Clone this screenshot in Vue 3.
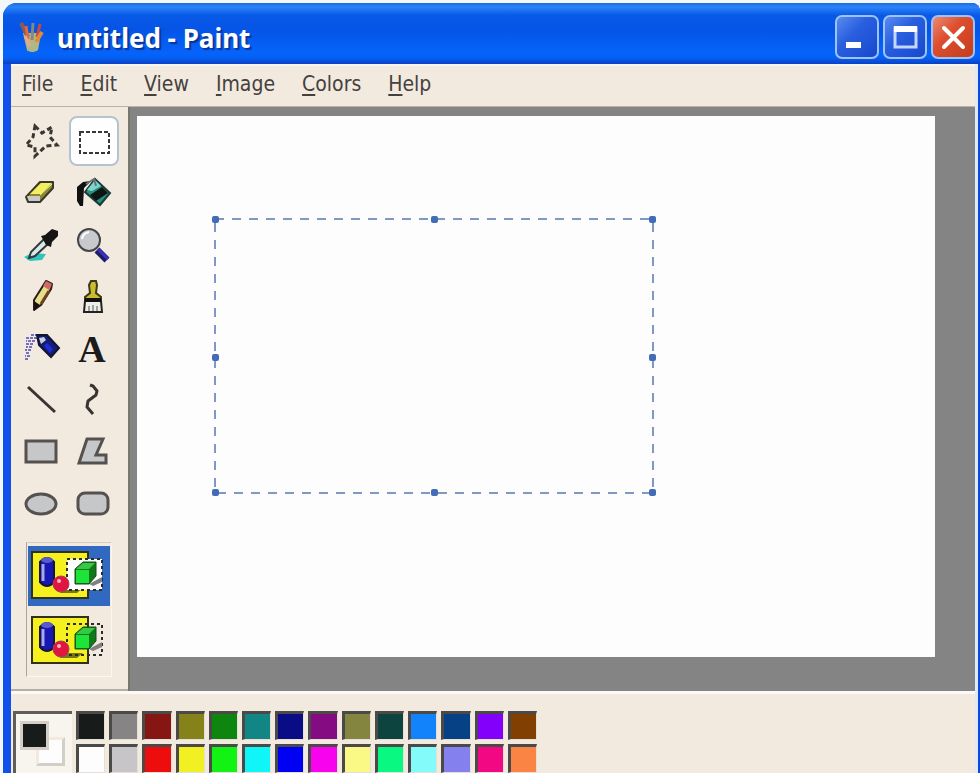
<template>
  <div class="desktop">
    <main class="window">
      <!-- Title bar -->
      <header class="title-bar">
        <svg class="app-icon" viewBox="0 0 26 34" aria-hidden="true">
          <path d="M4 13 L22 13 L19 30 Q13 34 8 30 Z" fill="#c5b56c" />
          <path d="M8 14 L10 31 M13 14 L13 32 M18 14 L16 31" stroke="#a9b98e" stroke-width="3" fill="none" />
          <path d="M2 3 L9 17" stroke="#8c5a55" stroke-width="4" fill="none" />
          <path d="M7 6 L9 19" stroke="#d96a45" stroke-width="3" fill="none" />
          <path d="M14 3 L13 20" stroke="#7d8b86" stroke-width="3" fill="none" />
          <path d="M21 4 L18 17" stroke="#c64a41" stroke-width="3" fill="none" />
          <path d="M23 12 L17 22" stroke="#df8b39" stroke-width="4" fill="none" />
          <path d="M6 16 L11 26" stroke="#e9a88c" stroke-width="3" fill="none" />
        </svg>
        <h1 class="title">untitled - Paint</h1>
        <div class="window-buttons">
          <button class="win-btn" type="button" aria-label="Minimize">
            <svg viewBox="0 0 40 40"><rect x="9" y="25" width="15" height="6" fill="#fff" /></svg>
          </button>
          <button class="win-btn" type="button" aria-label="Maximize">
            <svg viewBox="0 0 40 40">
              <rect x="10" y="11" width="21" height="19" fill="none" stroke="#c3d6fb" stroke-width="3" />
              <rect x="9" y="9" width="23" height="6" fill="#fff" />
            </svg>
          </button>
          <button class="win-btn close" type="button" aria-label="Close">
            <svg viewBox="0 0 40 40">
              <path d="M11 11 L30 30 M30 11 L11 30" stroke="#fff" stroke-width="4" stroke-linecap="round" />
            </svg>
          </button>
        </div>
      </header>

      <div class="client">
        <!-- Menu -->
        <nav class="menu-bar">
          <button v-for="item in menus" :key="item" class="menu-item" type="button">
            <u>{{ item[0] }}</u>{{ item.slice(1) }}
          </button>
        </nav>

        <div class="work-area">
          <!-- Tools -->
          <aside class="toolbox">
            <div class="tools">
              <button
                v-for="tool in tools"
                :key="tool.name"
                class="tool"
                :class="{ active: tool.name === activeTool }"
                type="button"
                :aria-label="tool.name"
                :aria-pressed="tool.name === activeTool"
                @click="activeTool = tool.name"
              >
                <span v-if="tool.letter" class="letter">{{ tool.letter }}</span>
                <svg v-else viewBox="0 0 40 40" v-html="tool.art"></svg>
              </button>
            </div>

            <div class="options">
              <button
                v-for="mode in modes"
                :key="mode"
                class="option"
                :class="{ active: mode === activeMode }"
                type="button"
                :aria-label="mode"
                :aria-pressed="mode === activeMode"
                @click="activeMode = mode"
              >
                <svg viewBox="0 0 76 50">
                  <rect x="1" y="1" width="56" height="46" fill="#f6f01f" stroke="#333018" stroke-width="2" />
                  <path d="M28 42 L46 42 L52 37 L38 37 Z" fill="#77741a" />
                  <path d="M9 11 Q16 3 23 11 L23 31 Q16 39 9 31 Z" fill="#1717b4" stroke="#15153f" stroke-width="2" />
                  <path d="M12 13 L12 30" stroke="#a7a7ec" stroke-width="3" />
                  <ellipse cx="16" cy="9" rx="6" ry="3" fill="#5a5acb" />
                  <rect
                    x="36" y="8" width="35" height="31"
                    :fill="mode === 'Opaque' ? '#fff' : 'none'"
                    stroke="#2b2b2b" stroke-width="2" stroke-dasharray="3 3"
                  />
                  <circle cx="30" cy="33" r="8" fill="#e01540" stroke="#a6415a" stroke-width="1" />
                  <circle cx="28" cy="30" r="2" fill="#ffb6c6" />
                  <path d="M58 33 L71 26 L71 31 L62 35 Z" fill="#808080" />
                  <path d="M44 18 L52 11 L65 11 L65 25 L58 33 L44 33 Z" fill="#11781b" stroke="#174d1a" stroke-width="1" />
                  <path d="M45 18 L52 12 L64 12 L58 18 Z" fill="#35c944" />
                  <rect x="45" y="19" width="13" height="13" fill="#1ee43a" />
                </svg>
              </button>
            </div>
          </aside>

          <!-- Canvas -->
          <section class="workspace">
            <div class="canvas">
              <svg class="selection" viewBox="0 0 444 280" aria-hidden="true">
                <rect x="3" y="3" width="438" height="274" fill="none" stroke="#8099c4" stroke-width="2" stroke-dasharray="9 8" />
                <rect v-for="(h, i) in handles" :key="i" :x="h[0]" :y="h[1]" width="7" height="7" rx="2" fill="#426cb8" />
              </svg>
            </div>
          </section>
        </div>

        <!-- Color box -->
        <footer class="color-box">
          <div class="current">
            <span class="chip back"></span>
            <span class="chip front" :style="{ background: foreground }"></span>
          </div>
          <div class="swatches">
            <button
              v-for="color in colors"
              :key="color"
              class="swatch"
              type="button"
              :aria-label="color"
              :style="{ background: color }"
              @click="foreground = color"
            ></button>
          </div>
        </footer>
      </div>
    </main>
  </div>
</template>

<script setup>
import { ref } from 'vue'

const menus = ['File', 'Edit', 'View', 'Image', 'Colors', 'Help']

const activeTool = ref('Select')
const activeMode = ref('Opaque')
const foreground = ref('#171c1a')

const modes = ['Opaque', 'Transparent']

const tools = [
  {
    name: 'Free-Form Select',
    art: '<path d="M13 5 L20 12 L30 6 L28 16 L35 24 L24 25 L13 35 L13 26 L4 24 L11 16 Z" fill="none" stroke="#3a3634" stroke-width="3" stroke-dasharray="5 3"/>'
  },
  {
    name: 'Select',
    art: '<rect x="6" y="11" width="29" height="21" fill="none" stroke="#3a3634" stroke-width="2" stroke-dasharray="4 2"/>'
  },
  {
    name: 'Eraser',
    art: `<path d="M4 24 L18 9 L31 9 L31 15 L18 29 L6 29 Z" fill="#8c8a2a" stroke="#3b392b" stroke-width="2" stroke-linejoin="round"/>
      <path d="M8 21 L19 10 L30 10 L19 21 Z" fill="#f3ee62"/>
      <path d="M5 23 L18 23 L18 28 L7 28 Z" fill="#c9c9cc"/>
      <path d="M18 22 L30 11" stroke="#f8f5ac" stroke-width="1"/>`
  },
  {
    name: 'Fill With Color',
    art: `<path d="M3 28 L3 14 L9 9 L17 8 L10 15 L9 33 L6 33 Z" fill="#111"/>
      <path d="M21 6 L36 20 L26 32 L11 19 Z" fill="#23907f" stroke="#1c3a36" stroke-width="2"/>
      <path d="M21 7 L27 13 L18 18 L13 17 Z" fill="#7ed4cf"/>
      <path d="M16 22 L28 14 L34 20 L22 28 Z" fill="#101514"/>
      <path d="M12 11 L20 6 L22 13" fill="none" stroke="#6c7372" stroke-width="2"/>`
  },
  {
    name: 'Pick Color',
    art: `<path d="M2 32 L10 28 L24 29 L20 35 L8 36 Z" fill="#2ec5bd"/>
      <path d="M7 33 L9 27 L22 14 L27 18 L13 31 Z" fill="#d9e9e7" stroke="#31393a" stroke-width="2"/>
      <path d="M19 11 L23 10 L30 4 L36 6 L36 11 L30 17 L29 22 L24 20 Z" fill="#151515"/>`
  },
  {
    name: 'Magnifier',
    art: `<path d="M23 25 L33 35" stroke="#1d1d66" stroke-width="7"/>
      <path d="M24 24 L34 34" stroke="#3b32bd" stroke-width="3"/>
      <circle cx="15" cy="15" r="11" fill="#c7c9cc" stroke="#454547" stroke-width="2"/>
      <path d="M8 14 Q9 8 15 7" fill="none" stroke="#fff" stroke-width="2"/>`
  },
  {
    name: 'Pencil',
    art: `<path d="M12 33 L12 23 L24 4 L30 7 L29 12 L19 28 Z" fill="#e5df87" stroke="#2f1c18" stroke-width="2" stroke-linejoin="round"/>
      <path d="M21 9 L24 4 L30 7 L27 13 Z" fill="#cf6c6a"/>
      <path d="M27 14 L19 27" stroke="#6d4123" stroke-width="3"/>
      <path d="M12 24 L18 28 L12 34 Z" fill="#1c1110"/>`
  },
  {
    name: 'Brush',
    art: `<path d="M17 4 L22 4 L23 8 L22 16 L27 20 L27 24 L11 24 L11 20 L16 16 L15 8 Z" fill="#c9bd2d" stroke="#3d3918" stroke-width="2"/>
      <path d="M11 24 L27 24 L28 35 L10 35 Z" fill="#efefe9" stroke="#222" stroke-width="2"/>
      <path d="M11 23 L27 23" stroke="#111" stroke-width="4"/>
      <path d="M15 34 L15 29 M19 34 L19 28 M23 34 L23 29" stroke="#555" stroke-width="1"/>`
  },
  {
    name: 'Airbrush',
    art: `<path d="M16 6 L8 6 M15 9 L4 9 M13 12 L4 12 M11 15 L3 15 M10 18 L4 18 M9 21 L3 21 M7 24 L4 24 M8 27 L3 27 M6 30 L3 30" fill="none" stroke="#7670c0" stroke-width="2" stroke-dasharray="3 1"/>
      <path d="M15 6 L25 6 L37 19 L29 28 L17 16 Z" fill="#151d78" stroke="#111530" stroke-width="2"/>
      <path d="M17 9 L22 8 L24 11 L19 15 Z" fill="#c9d2cc"/>
      <path d="M25 14 L31 20 L28 24 L22 17 Z" fill="#1d2fd4"/>`
  },
  {
    name: 'Text',
    letter: 'A'
  },
  {
    name: 'Line',
    art: '<path d="M6 6 L33 31" stroke="#3a3331" stroke-width="3"/>'
  },
  {
    name: 'Curve',
    art: '<path d="M16 4 L19 5 L23 10 L22 14 L14 20 L13 26 L19 33" fill="none" stroke="#3a3331" stroke-width="3" stroke-linejoin="round"/>'
  },
  {
    name: 'Rectangle',
    art: '<rect x="4" y="8" width="30" height="21" fill="#c6c7c9" stroke="#55514f" stroke-width="3"/>'
  },
  {
    name: 'Polygon',
    art: '<path d="M13 6 L29 6 L22 22 L32 22 L32 30 L5 30 Z" fill="#c6c7c9" stroke="#55514f" stroke-width="3"/>'
  },
  {
    name: 'Ellipse',
    art: '<ellipse cx="19" cy="19" rx="15" ry="10" fill="#c6c7c9" stroke="#55514f" stroke-width="3"/>'
  },
  {
    name: 'Rounded Rectangle',
    art: '<rect x="4" y="8" width="30" height="21" rx="7" fill="#c6c7c9" stroke="#55514f" stroke-width="3"/>'
  }
]

const handles = [
  [0, 0], [219, 0], [437, 0],
  [0, 138], [437, 138],
  [0, 273], [219, 273], [437, 273]
]

const colors = [
  '#171c1a', '#868485', '#861613', '#86821a', '#0d850f', '#128685', '#0a0c86',
  '#850b82', '#84863f', '#0d4440', '#1283fb', '#064085', '#8300fb', '#823f02',
  '#fdfdfd', '#c8c5c9', '#ed0d0d', '#f1f022', '#13f313', '#10f5f8', '#0000f2',
  '#f803ee', '#faf985', '#09f882', '#83fbfb', '#8480ed', '#f10882', '#f98444'
]
</script>

<style>
body {
  margin: 0;
  background: #f4f7fa;
}
</style>

<style scoped>
* {
  box-sizing: border-box;
}

button {
  margin: 0;
  padding: 0;
  border: 0;
  background: none;
  font: inherit;
  color: inherit;
}

svg {
  display: block;
}

.desktop {
  height: 100vh;
  padding: 3px 0 0 3px;
  overflow: hidden;
}

.window {
  display: flex;
  flex-direction: column;
  height: 100%;
  border-radius: 14px 8px 0 0;
  overflow: hidden;
  background: #0b48dc;
}

.title-bar {
  display: flex;
  align-items: center;
  height: 61px;
  padding: 6px 5px 0 16px;
  background: linear-gradient(#1f6be0 0, #2b84f8 4px, #0a5ae8 12px, #0554e6 26px, #0664fa 50px, #0560f4 55px, #0a3fc4 61px);
}

.app-icon {
  width: 26px;
  height: 34px;
}

.title {
  flex: 1;
  margin: 0 0 0 12px;
  padding-top: 2px;
  font: bold 26px/36px "Noto Sans", sans-serif;
  color: #fff;
  text-shadow: 2px 2px 1px #0a359c;
  white-space: nowrap;
}

.window-buttons {
  display: flex;
  gap: 4px;
}

.win-btn {
  width: 44px;
  height: 44px;
  border: 2px solid #9dc3fa;
  border-radius: 7px;
  background: linear-gradient(135deg, #5a8bf0, #2a5fe0 40%, #1748cc);
}

.win-btn.close {
  background: linear-gradient(135deg, #ec8a72, #dd4e2e 40%, #c53d1c);
}

.client {
  display: flex;
  flex: 1;
  flex-direction: column;
  min-height: 0;
  margin: 0 2px 0 0;
  border-left: 8px solid #1150ea;
  border-right: 3px solid #dcebf5;
  background: #f2eadf;
}

.menu-bar {
  display: flex;
  gap: 27px;
  height: 43px;
  padding: 0 11px 4px;
  border-top: 2px solid #f8f6f2;
  border-bottom: 1px solid #b9b2a6;
  font: 21px/32px "DejaVu Sans Condensed", "DejaVu Sans", sans-serif;
  color: #45413d;
}

.menu-item u {
  text-decoration-thickness: 2px;
  text-underline-offset: 3px;
}

.work-area {
  display: flex;
  flex: 1;
  min-height: 0;
}

.toolbox {
  width: 117px;
  padding: 9px 6px 0;
  border-bottom: 2px solid #b5aea2;
}

.tools {
  display: grid;
  grid-template-columns: 50px 50px;
  grid-auto-rows: 50px;
  gap: 2px;
}

.tool {
  display: grid;
  place-items: center;
  border: 2px solid transparent;
  border-radius: 8px;
}

.tool.active {
  border-color: #b3c3d0;
  background: #fefefe;
}

.tool svg {
  width: 40px;
  height: 40px;
}

.letter {
  padding-right: 4px;
  font: bold 38px/44px "Liberation Serif", serif;
  color: #1b1b1b;
}

.options {
  width: 86px;
  margin: 12px 9px 0;
  padding: 3px 1px 5px;
  border: 1px solid #fbf7f0;
  border-top-color: #d5cec3;
  border-left-color: #aaa49b;
}

.option {
  display: grid;
  place-items: center;
  width: 100%;
  height: 60px;
}

.option + .option {
  margin-top: 5px;
}

.option.active {
  background: #3168c0;
}

.option svg {
  width: 76px;
  height: 50px;
}

.workspace {
  display: flex;
  flex: 1;
  padding: 9px 40px 34px 7px;
  border-left: 2px solid #77766f;
  background: #848484;
}

.canvas {
  position: relative;
  flex: 1;
  background: #fdfdfd;
}

.selection {
  position: absolute;
  left: 75px;
  top: 100px;
  width: 444px;
  height: 280px;
}

.color-box {
  display: flex;
  gap: 4px;
  height: 82px;
  padding: 17px 2px 0;
  border-top: 3px solid #fcfaf6;
}

.current {
  position: relative;
  width: 59px;
  border-top: 3px solid #605d5a;
  border-left: 3px solid #605d5a;
  background: #f8f4ee;
}

.chip {
  position: absolute;
  width: 29px;
  height: 29px;
  border: 3px solid #d3cec6;
}

.chip.front {
  left: 4px;
  top: 7px;
}

.chip.back {
  left: 20px;
  top: 23px;
  border-top-color: #f2eadf;
  border-left-color: #f2eadf;
  background: #fdfdfd;
}

.swatches {
  display: grid;
  grid-template-columns: repeat(14, 1fr);
  grid-auto-rows: 29px;
  gap: 4px;
  width: 461px;
}

.swatch {
  border: 1px solid #e5e0d6;
  border-top: 3px solid #4b4a48;
  border-left: 3px solid #4b4a48;
}
</style>
